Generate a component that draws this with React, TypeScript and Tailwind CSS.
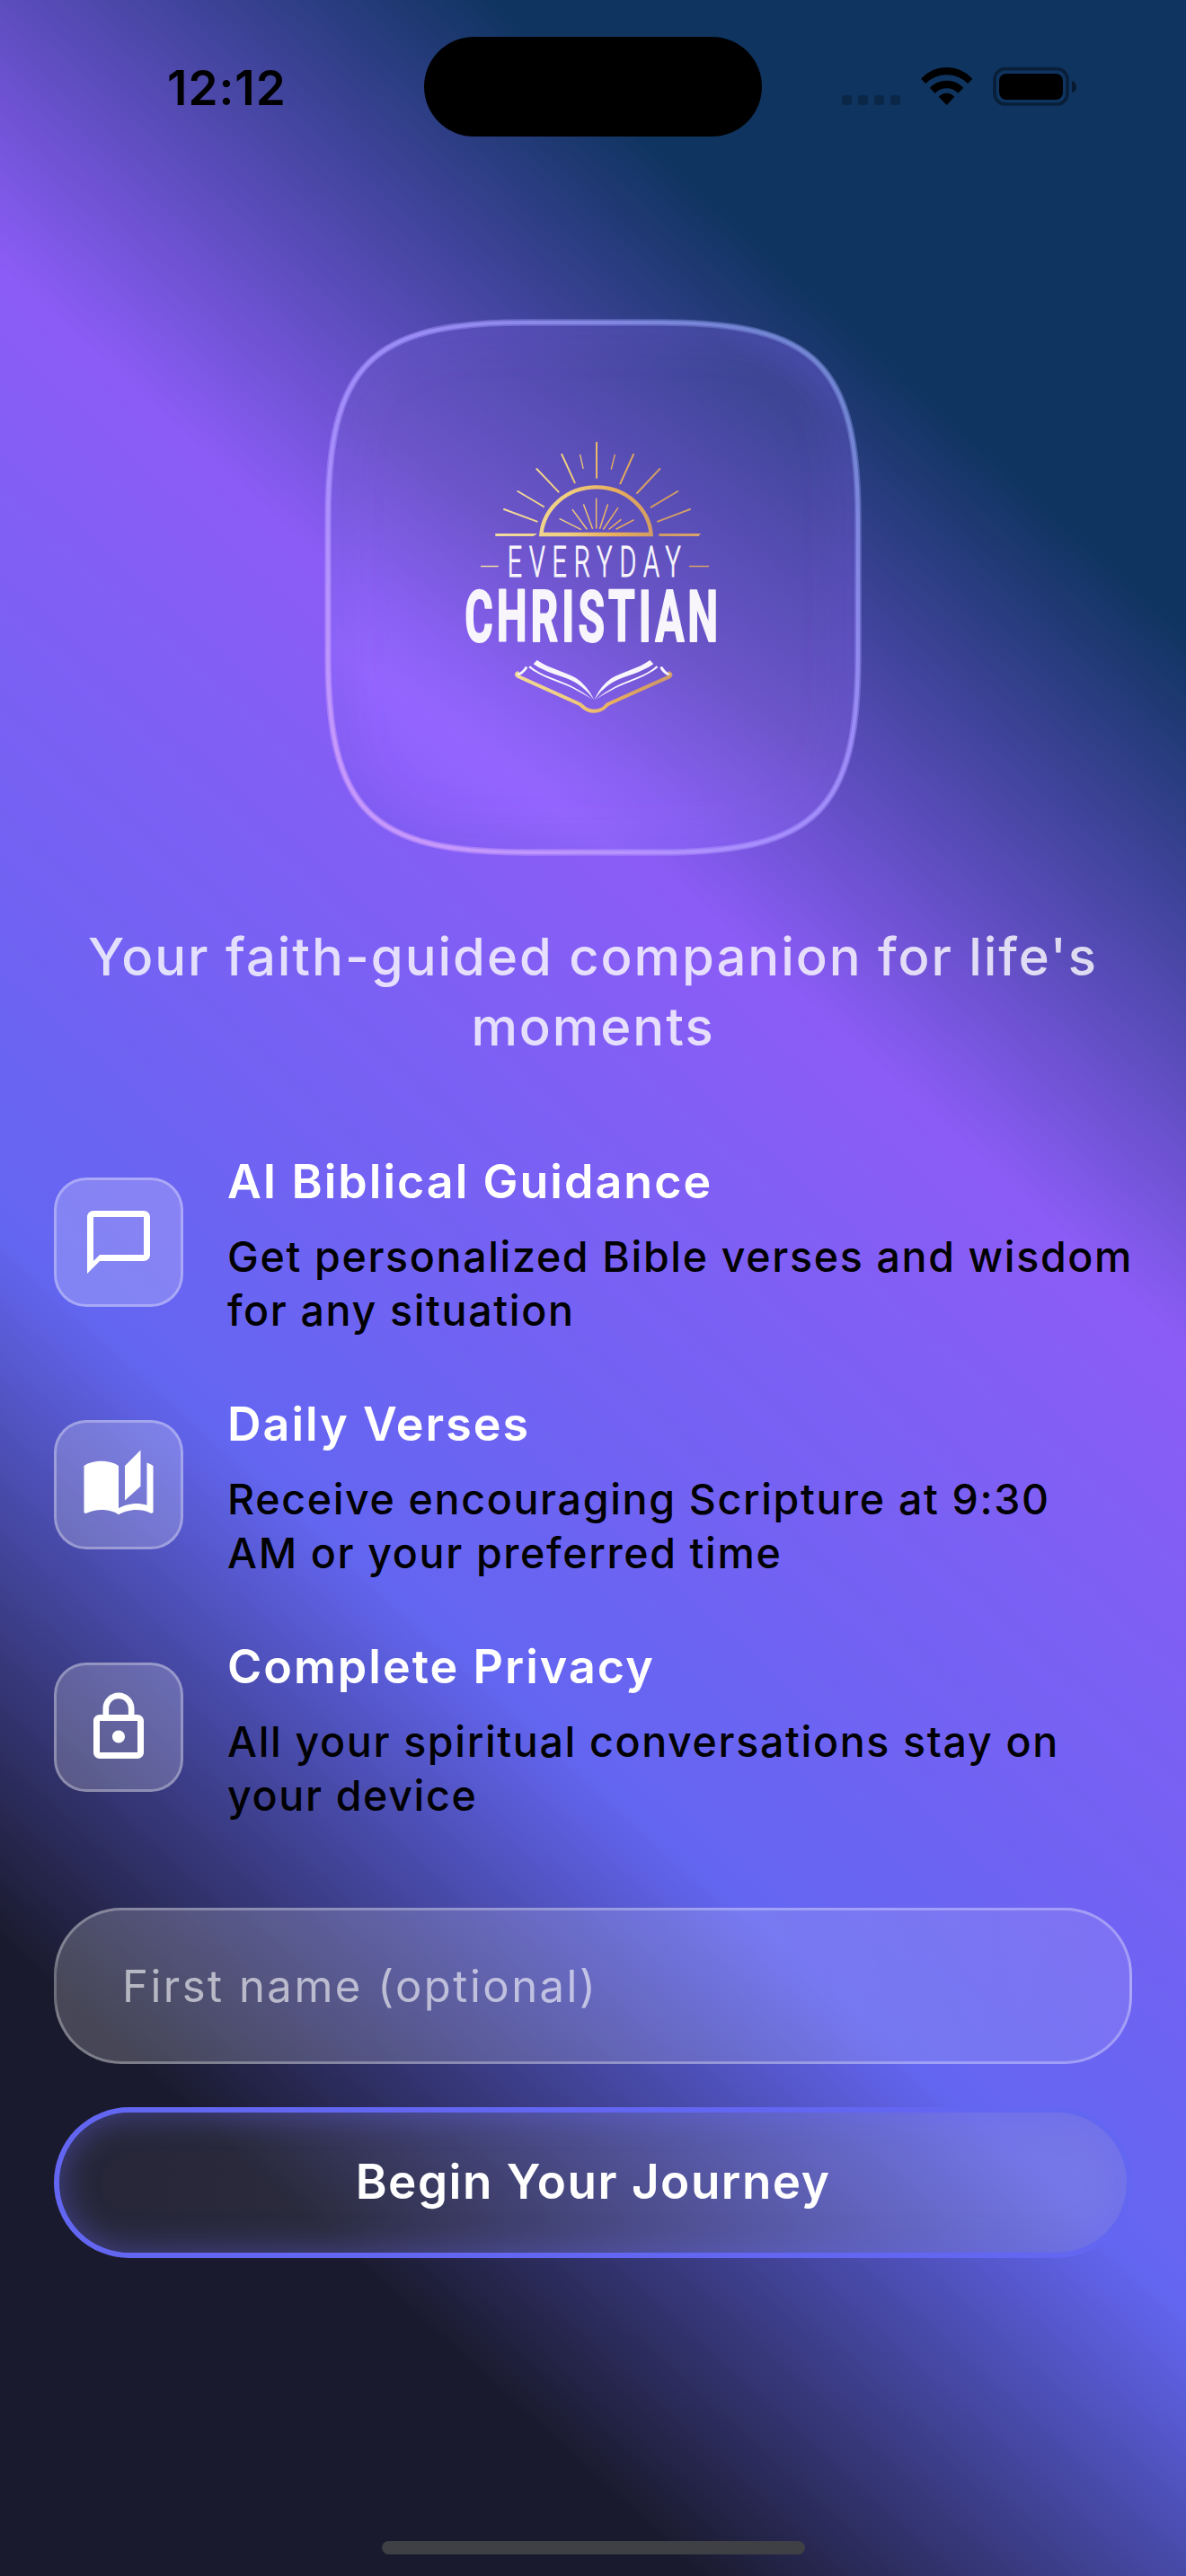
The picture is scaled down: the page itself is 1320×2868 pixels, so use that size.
import type { ReactNode } from "react";
import { MdAutoStories, MdChatBubbleOutline, MdLockOutline } from "react-icons/md";

const CARD_SHAPE =
  "M5 225C5 52 52 5 225 5H375C548 5 595 52 595 225V375C595 548 548 595 375 595H225C52 595 5 548 5 375Z";

function StatusBar() {
  return (
    <header className="flex h-[354px] items-start">
      <p className="mt-[71px] ml-[186px] w-[286px] text-[53px] leading-[54px] font-semibold tracking-[1px] text-black">
        12:12
      </p>
      <div className="mt-[41px] h-[111px] w-[376px] rounded-full bg-black" />
      <svg className="mt-[60px] ml-[72px] h-[70px] w-[300px]" viewBox="0 0 900 210">
        <g fill="#000" fillOpacity="0.25">
          <rect x="51" y="138" width="33" height="33" rx="10" />
          <rect x="105" y="138" width="33" height="33" rx="10" />
          <rect x="159" y="138" width="33" height="33" rx="10" />
          <rect x="213" y="138" width="33" height="33" rx="10" />
        </g>
        <g>
          <path d="M315 83Q350 45 401 45T487 83L471 99Q442 70 401 70T331 99Z" />
          <path d="M344 113Q368 89 401 89T457 113L439 131Q422 115 401 115T362 131Z" />
          <path d="M374 143Q386 131 401 131T427 143L401 171Z" />
        </g>
        <rect
          x="561"
          y="50"
          width="243"
          height="118"
          rx="35"
          fill="none"
          stroke="#000"
          strokeOpacity="0.4"
          strokeWidth="11"
        />
        <rect x="576" y="66" width="213" height="87" rx="24" />
        <path d="M819 90Q834 95 834 110T819 130Z" fillOpacity="0.5" />
      </svg>
    </header>
  );
}

const OUTER_RAYS = [
  [492, 68, 492, 186],
  [437, 109, 447, 154],
  [553, 109, 541, 156],
  [376, 108, 419, 202],
  [615, 108, 571, 205],
  [292, 156, 365, 233],
  [703, 156, 627, 237],
  [229, 231, 315, 282],
  [763, 231, 674, 284],
  [183, 291, 293, 332],
  [804, 291, 696, 332],
];

const INNER_RAYS = [
  [491, 256, 491, 354],
  [449, 276, 478, 355],
  [529, 276, 503, 355],
  [412, 293, 459, 357],
  [563, 287, 515, 357],
  [573, 326, 534, 357],
  [369, 323, 439, 358],
  [615, 327, 558, 357],
];

function Logo() {
  return (
    <svg className="h-[340px] w-[320px]" viewBox="0 0 960 1020">
      <defs>
        <linearGradient id="gold" gradientUnits="userSpaceOnUse" x1="150" y1="0" x2="830" y2="0">
          <stop offset="0" stopColor="#f2dca0" />
          <stop offset="0.35" stopColor="#f0d080" />
          <stop offset="0.6" stopColor="#e8ad5c" />
          <stop offset="0.8" stopColor="#cf9a66" />
          <stop offset="1" stopColor="#d9a468" />
        </linearGradient>
      </defs>
      <g stroke="url(#gold)" fill="none" strokeLinecap="round">
        {OUTER_RAYS.map(([x1, y1, x2, y2]) => (
          <path
            key={`${x1}-${y1}`}
            d={`M${x1} ${y1}L${x2 + 0.1} ${y2}`}
            strokeWidth={x1 > 430 && x1 < 560 && x1 !== 492 ? 4 : 6}
          />
        ))}
        {INNER_RAYS.map(([x1, y1, x2, y2]) => (
          <path key={`${x1}-${y1}`} d={`M${x1} ${y1}L${x2 + 0.1} ${y2}`} strokeWidth="4.5" />
        ))}
        <path
          d="M307 375C315 290 390 217 491 217S667 290 674 375Z"
          strokeWidth="13"
          strokeLinecap="butt"
          strokeLinejoin="miter"
        />
        <path d="M154 376.5H282.1L282 376.6M700 376.5H834L834 376.6" strokeWidth="9" strokeLinecap="butt" />
        <path d="M105 481.5H163L163 481.6M801 481.5H866L866 481.6" strokeWidth="4" strokeLinecap="butt" />
        <path
          d="M228 838Q221 844 230 849L436 942C446 947 452 965 484 965S520 948 530 942L735 850Q744 844 735 838"
          strokeWidth="12"
          strokeLinejoin="round"
        />
      </g>
      <g fill="#f8f6fc" fontFamily="Roboto, 'Liberation Sans', sans-serif" strokeLinejoin="round">
        <text
          transform="translate(194 517) scale(0.6 1)"
          fontSize="143"
          fontWeight="300"
          letterSpacing="40"
          stroke="#f8f6fc"
          strokeWidth="3"
        >
          EVERYDAY
        </text>
        <text
          transform="translate(52 732) scale(0.6 1)"
          fontSize="240"
          fontWeight="700"
          letterSpacing="20"
          stroke="#f8f6fc"
          strokeWidth="6"
        >
          CHRISTIAN
        </text>
      </g>
      <g fill="#f8f6fc">
        <path d="M281 808L293 795C335 824 385 832 425 856Q462 882 484 928Q454 888 418 868C380 847 322 838 281 808Z" />
        <path d="M682 808L670 795C631 824 581 832 541 856Q504 882 484 928Q512 888 548 868C586 847 641 838 682 808Z" />
        <path d="M265 819L270 814C305 848 370 860 415 885Q450 903 479 926Q446 907 412 889C370 868 310 854 265 819Z" />
        <path d="M697 819L692 814C659 848 596 860 551 885Q516 903 489 926Q520 907 554 889C596 868 652 854 697 819Z" />
        <path d="M225 842Q246 832 255 815L262 820Q252 838 234 846Z" />
        <path d="M738 842Q720 832 711 815L703 820Q711 838 730 846Z" />
      </g>
    </svg>
  );
}

function LogoCard() {
  return (
    <div className="grid h-[600px] w-[600px] place-items-center">
      <svg className="col-start-1 row-start-1 h-[600px] w-[600px]" viewBox="0 0 600 600">
        <defs>
          <linearGradient id="glass" gradientUnits="userSpaceOnUse" x1="58" y1="633" x2="542" y2="-33">
            <stop offset="0" stopColor="#7d5cf4" />
            <stop offset="0.12" stopColor="#8b60fa" />
            <stop offset="0.23" stopColor="#9466ff" />
            <stop offset="0.32" stopColor="#8960f2" />
            <stop offset="0.5" stopColor="#6c55ca" />
            <stop offset="0.7" stopColor="#534cb0" />
            <stop offset="0.87" stopColor="#3b4592" />
            <stop offset="1" stopColor="#434aa4" />
          </linearGradient>
          <linearGradient id="rim" gradientUnits="userSpaceOnUse" x1="20" y1="608" x2="580" y2="-8">
            <stop offset="0.1" stopColor="#cc9dfc" />
            <stop offset="0.4" stopColor="#a992ff" />
            <stop offset="0.6" stopColor="#9f90fb" />
            <stop offset="0.9" stopColor="#768ad8" />
          </linearGradient>
          <filter id="soft" x="-10%" y="-10%" width="120%" height="120%">
            <feGaussianBlur stdDeviation="20" />
          </filter>
          <clipPath id="cardClip">
            <path d={CARD_SHAPE} />
          </clipPath>
        </defs>
        <path d={CARD_SHAPE} fill="url(#glass)" />
        <g clipPath="url(#cardClip)">
          <path d={CARD_SHAPE} fill="none" stroke="#6a56dc" strokeOpacity="0.22" strokeWidth="50" filter="url(#soft)" />
        </g>
        <path d={CARD_SHAPE} fill="none" stroke="url(#rim)" strokeOpacity="0.5" strokeWidth="7.5" />
        <path d={CARD_SHAPE} fill="none" stroke="url(#rim)" strokeOpacity="0.85" strokeWidth="4" />
      </svg>
      <div className="z-10 col-start-1 row-start-1 -translate-y-[14px]">
        <Logo />
      </div>
    </div>
  );
}

function Feature({ icon, title, lines }: { icon: ReactNode; title: string; lines: string[] }) {
  return (
    <li className="flex items-center gap-[49px]">
      <div className="flex h-[144px] w-[144px] shrink-0 items-center justify-center rounded-[36px] border-[3px] border-white/30 bg-white/20 text-[84px] text-white">
        {icon}
      </div>
      <div className="whitespace-nowrap">
        <h2 className="text-[52px] leading-[78px] font-semibold tracking-[2.02px] text-white">{title}</h2>
        <p className="mt-[14px] text-[46.5px] leading-[60px] font-medium tracking-[1.67px] text-black">
          {lines.map((line) => (
            <span key={line} className="block">
              {line}
            </span>
          ))}
        </p>
      </div>
    </li>
  );
}

export default function App() {
  return (
    <div className="flex h-[2868px] w-[1320px] flex-col overflow-hidden bg-[linear-gradient(42.3deg,#1a1a2e_17.4%,#6366f1_36.85%,#8b5cf6_63.15%,#0f3460_82.8%)] font-['Inter','Liberation_Sans',sans-serif]">
      <StatusBar />
      <main className="flex flex-col items-center px-[60px]">
        <LogoCard />
        <p className="mt-[72px] text-center text-[58px] leading-[78px] font-medium tracking-[1.96px] whitespace-nowrap text-white/80">
          <span className="block">Your faith-guided companion for life's</span>
          <span className="block">moments</span>
        </p>
        <ul className="mt-[95px] flex w-full flex-col gap-[58px]">
          <Feature
            icon={<MdChatBubbleOutline />}
            title="AI Biblical Guidance"
            lines={["Get personalized Bible verses and wisdom", "for any situation"]}
          />
          <Feature
            icon={<MdAutoStories />}
            title="Daily Verses"
            lines={["Receive encouraging Scripture at 9:30", "AM or your preferred time"]}
          />
          <Feature
            icon={<MdLockOutline />}
            title="Complete Privacy"
            lines={["All your spiritual conversations stay on", "your device"]}
          />
        </ul>
        <input
          className="mt-[95px] h-[174px] w-full rounded-[75px] border-[3px] border-white/30 bg-linear-to-r from-white/20 to-white/10 px-[73px] text-[49px] tracking-[2.5px] text-white outline-none placeholder:text-white/60"
          placeholder="First name (optional)"
        />
        <button className="mt-[48px] h-[168px] w-full rounded-full border-[6px] border-[#6366f1] bg-linear-to-r from-[#8c8c8c]/10 to-[#b4b4c4]/22 text-[53px] font-semibold tracking-[1.5px] text-white shadow-[inset_0_0_36px_3px_rgba(99,102,241,0.42)]">
          Begin Your Journey
        </button>
      </main>
      <div className="mt-auto mb-[24px] h-[15px] w-[471px] self-center rounded-full bg-[#3f3f46]" />
    </div>
  );
}
